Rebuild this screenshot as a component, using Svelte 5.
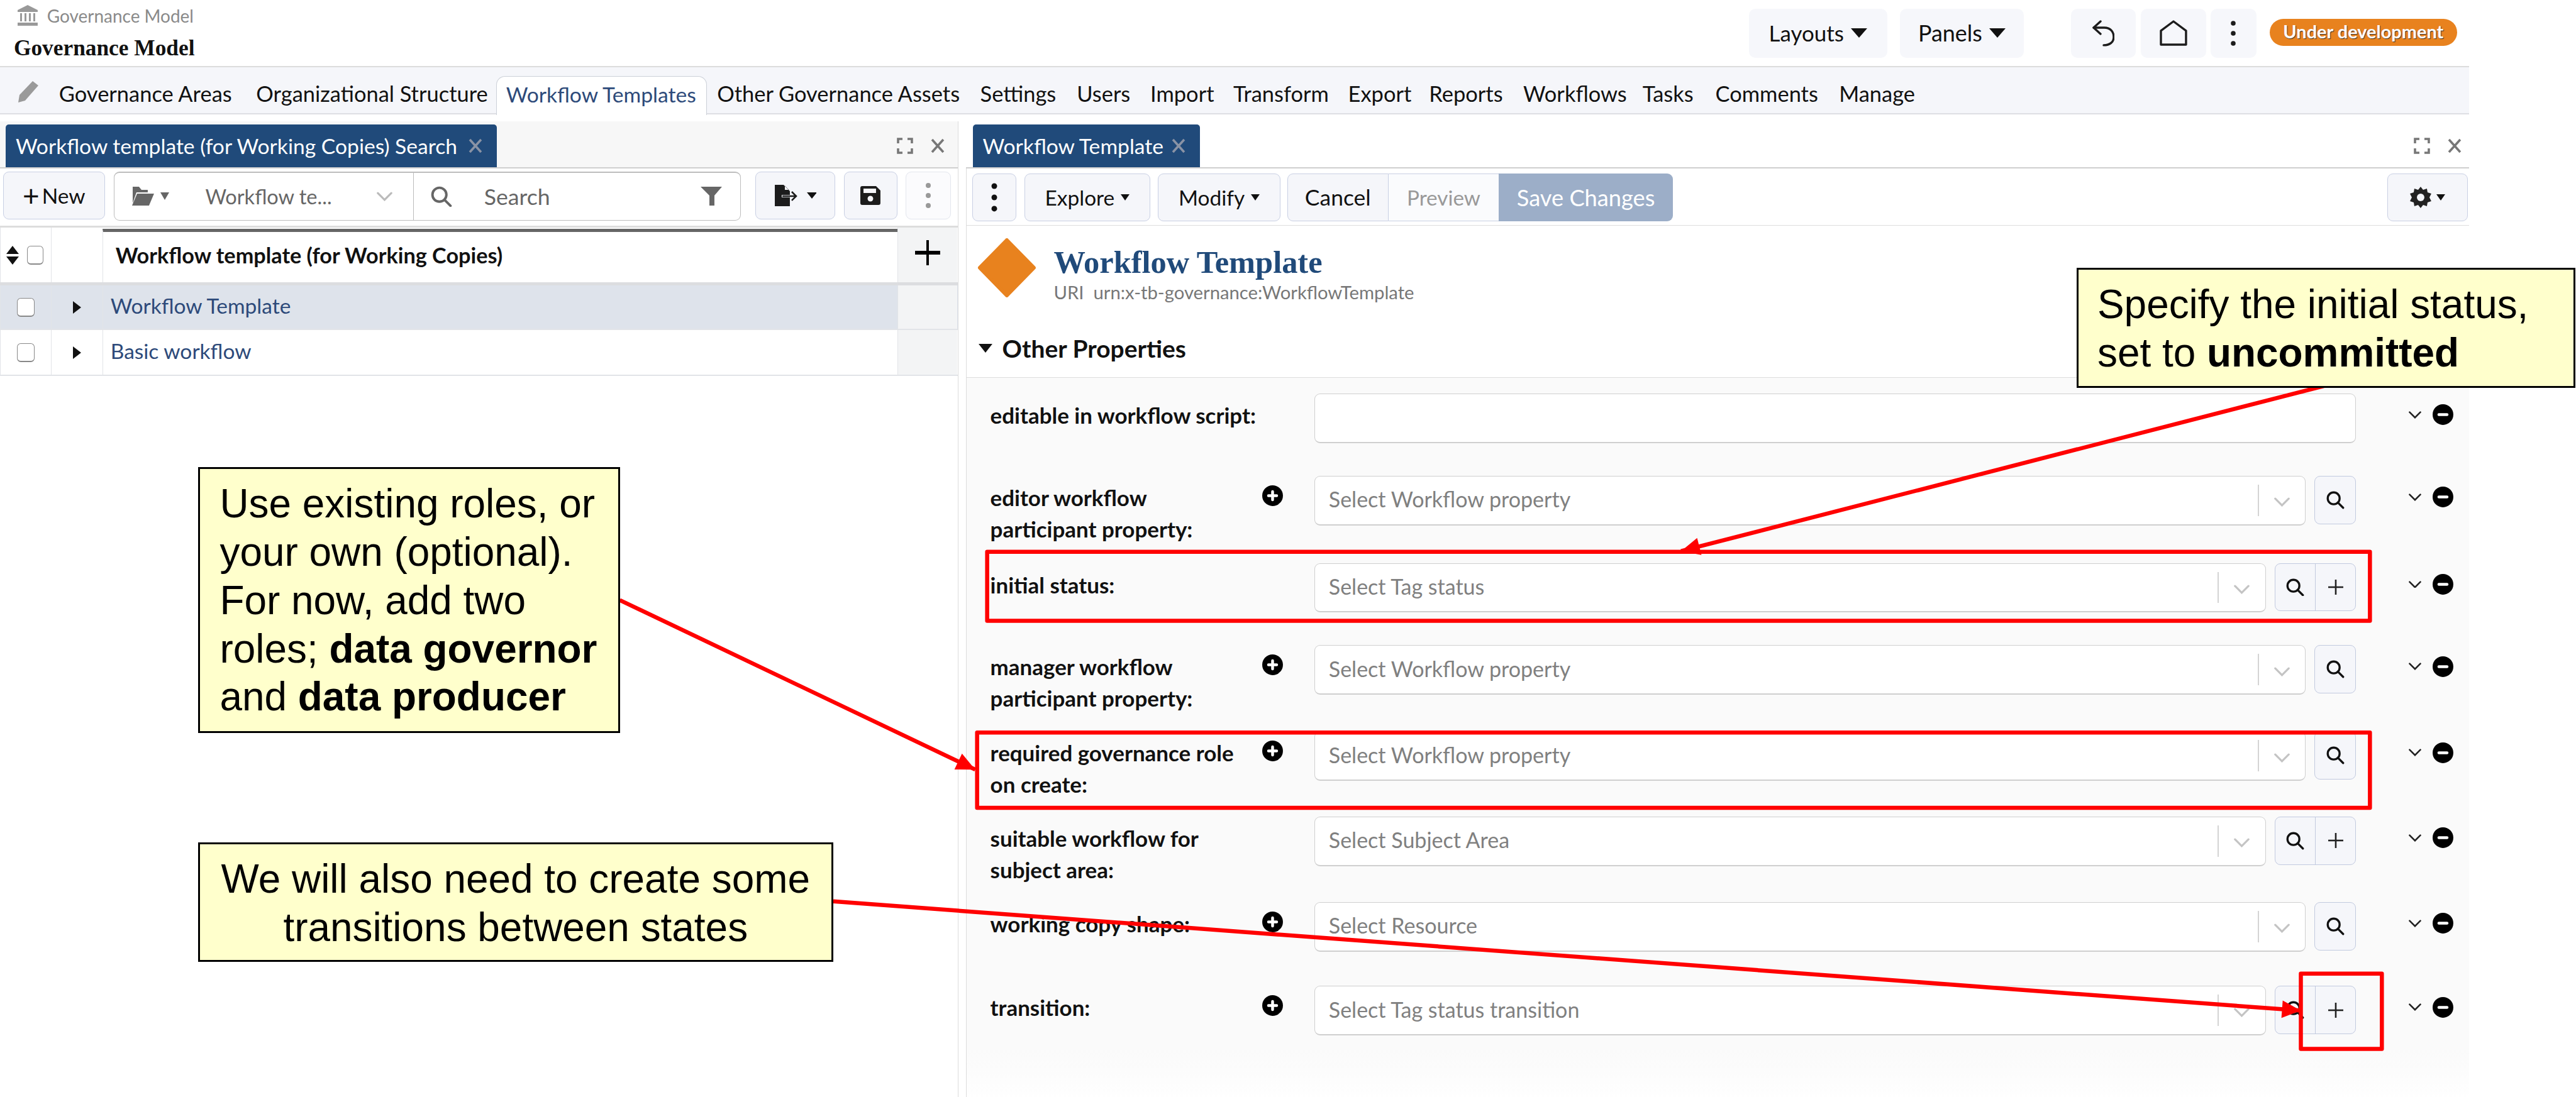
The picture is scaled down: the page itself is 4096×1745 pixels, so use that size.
<script lang="ts">
	const navItems = [
		{ label: 'Governance Areas', w: 281 },
		{ label: 'Organizational Structure', w: 366 },
		{ label: 'Workflow Templates', w: 304, active: true },
		{ label: 'Other Governance Assets', w: 386 },
		{ label: 'Settings', w: 121 },
		{ label: 'Users', w: 84 },
		{ label: 'Import', w: 99 },
		{ label: 'Transform', w: 150 },
		{ label: 'Export', w: 96 },
		{ label: 'Reports', w: 117 },
		{ label: 'Workflows', w: 157 },
		{ label: 'Tasks', w: 83 },
		{ label: 'Comments', w: 164 },
		{ label: 'Manage', w: 129 }
	];

	const rows = [
		{ lines: ['editable in workflow script:'], h: 131, text: true },
		{ lines: ['editor workflow', 'participant property:'], add: true, ph: 'Select Workflow property', h: 139 },
		{ lines: ['initial status:'], ph: 'Select Tag status', create: true, h: 131 },
		{ lines: ['manager workflow', 'participant property:'], add: true, ph: 'Select Workflow property', h: 137 },
		{ lines: ['required governance role', 'on create:'], add: true, ph: 'Select Workflow property', h: 136 },
		{ lines: ['suitable workflow for', 'subject area:'], ph: 'Select Subject Area', create: true, h: 136 },
		{ lines: ['working copy shape:'], add: true, ph: 'Select Resource', h: 134 },
		{ lines: ['transition:'], add: true, ph: 'Select Tag status transition', create: true, h: 100 }
	];

	const boxes = [
		{ x: 1572, y: 879, w: 2202, h: 110 },
		{ x: 1556, y: 1167, w: 2218, h: 120 },
		{ x: 3664, y: 1551, w: 129, h: 120 }
	];

	const arrows = [
		{ x1: 3704, y1: 614, x2: 2677, y2: 878 },
		{ x1: 987, y1: 956, x2: 1553, y2: 1226 },
		{ x1: 1327, y1: 1436, x2: 3664, y2: 1610 }
	];

	// arrowhead triangle from the line's direction
	function head(a: { x1: number; y1: number; x2: number; y2: number }) {
		const dx = a.x2 - a.x1;
		const dy = a.y2 - a.y1;
		const len = Math.hypot(dx, dy);
		const ux = dx / len;
		const uy = dy / len;
		const bx = a.x2 - ux * 30;
		const by = a.y2 - uy * 30;
		const px = -uy * 14;
		const py = ux * 14;
		return `${a.x2},${a.y2} ${bx + px},${by + py} ${bx - px},${by - py}`;
	}
</script>

{#snippet searchIcon(size = 26)}
	<svg width={size} height={size} viewBox="0 0 26 26" fill="none" stroke="currentColor" stroke-width="3">
		<circle cx="10.5" cy="10.5" r="8.5" />
		<path d="M16.5 16.5 L24 24" stroke-linecap="round" />
	</svg>
{/snippet}

{#snippet chevron(color = '#bbb', w = 24, h = 14)}
	<svg width={w} height={h} viewBox="0 0 24 14" fill="none" stroke={color} stroke-width="3" stroke-linecap="round">
		<path d="M2 2 L12 12 L22 2" />
	</svg>
{/snippet}

{#snippet caret(w = 14, h = 12, color = '#111')}
	<svg width={w} height={h} viewBox="0 0 14 12" preserveAspectRatio="none"><path d="M0 0 H14 L7 12 Z" fill={color} /></svg>
{/snippet}

{#snippet roundIcon(sign: string)}
	<svg width="33" height="33" viewBox="0 0 33 33">
		<circle cx="16.5" cy="16.5" r="16.5" fill="#000" />
		<path
			d={sign === 'plus' ? 'M16.5 10 V23 M10 16.5 H23' : 'M10 16.5 H23'}
			stroke="#fff"
			stroke-width="4.5"
			stroke-linecap="round"
		/>
	</svg>
{/snippet}

{#snippet xMark(color = '#777')}
	<svg width="24" height="24" viewBox="0 0 24 24" fill="none" stroke={color} stroke-width="3.6">
		<path d="M3 2 L21 22 M21 2 L3 22" />
	</svg>
{/snippet}

{#snippet expand()}
	<svg width="26" height="26" viewBox="0 0 26 26" fill="none" stroke="#777" stroke-width="3.6">
		<path d="M2 9 V2 H9 M17 2 H24 V9 M24 17 V24 H17 M9 24 H2 V17" />
	</svg>
{/snippet}

<div class="page">
	<header class="top">
		<div class="brand">
			<div class="crumb">
				<svg width="34" height="34" viewBox="0 0 34 34" fill="#999">
					<path d="M17 0 L33 8 V11 H1 V8 Z" />
					<rect x="5" y="13" width="3" height="13" />
					<rect x="12" y="13" width="3" height="13" />
					<rect x="19" y="13" width="3" height="13" />
					<rect x="26" y="13" width="3" height="13" />
					<rect x="1" y="28" width="32" height="5" />
				</svg>
				<span>Governance Model</span>
			</div>
			<div class="model">Governance Model</div>
		</div>
		<div class="top-actions">
			<button class="top-btn layouts">Layouts {@render caret(26, 15)}</button>
			<button class="top-btn panels">Panels {@render caret(26, 15)}</button>
			<button class="top-btn undo" aria-label="Undo">
				<svg width="36" height="42" viewBox="0 0 36 42" fill="none" stroke="#1c1c1c" stroke-width="3.4" stroke-linecap="round" stroke-linejoin="round">
					<path d="M2 12 H19 C29 12 34 19 34 27 C34 35 28 40 18 40" />
					<path d="M13 2 L2 12 L13 22" />
				</svg>
			</button>
			<button class="top-btn home" aria-label="Home">
				<svg width="44" height="41" viewBox="0 0 44 41" fill="none" stroke="#1c1c1c" stroke-width="3.4" stroke-linejoin="round">
					<path d="M22 2 L42 17 V39 H2 V17 Z" />
				</svg>
			</button>
			<button class="top-btn dots" aria-label="More">
				<svg width="10" height="42" viewBox="0 0 10 42" fill="#1c1c1c">
					<circle cx="5" cy="5" r="3.8" /><circle cx="5" cy="21" r="3.8" /><circle cx="5" cy="37" r="3.8" />
				</svg>
			</button>
			<span class="badge">Under development</span>
		</div>
	</header>

	<nav class="nav">
		<svg class="pencil" width="36" height="36" viewBox="0 0 36 36" fill="#9a9a9a">
			<path d="M25 1 L34 8 L13 32 L2 35 L4 23 Z" />
		</svg>
		{#each navItems as item (item.label)}
			<span class="nav-item" class:active={item.active} style:width="{item.w}px">{item.label}</span>
		{/each}
	</nav>

	<main class="main">
		<section class="left">
			<div class="tabs left-tabs">
				<div class="tab" style:width="782px">
					<span class="tab-label">Workflow template (for Working Copies) Search</span>
					{@render xMark('#8a93a5')}
				</div>
				<div class="tab-tools">{@render expand()}{@render xMark()}</div>
			</div>
			<div class="toolbar left-bar">
				<button class="btn new"><span class="plus-sign">+</span>New</button>
				<div class="search-group">
					<div class="class-pick">
						<svg width="36" height="30" viewBox="0 0 36 30" fill="#666">
							<path d="M2 0 H12 L16 5 H26 V9 H8 L2 26 Z" />
							<path d="M9 11 H36 L28 30 H1 Z" />
						</svg>
						{@render caret(14, 12, '#666')}
						<span class="pick-text">Workflow te...</span>
						{@render chevron('#bbb', 27, 15)}
					</div>
					<div class="query">
						{@render searchIcon(34)}
						<span class="query-text">Search</span>
						<svg class="funnel" width="34" height="30" viewBox="0 0 34 30" fill="#666">
							<path d="M0 0 H34 L22 14 V30 H14 V14 Z" />
						</svg>
					</div>
				</div>
				<button class="btn export" aria-label="Export">
					<svg width="37" height="34" viewBox="0 0 37 34">
						<path d="M1 0 H15 L25 10 V16 H12 V20 H25 V34 H1 Z M17 1.5 V8 H23.5 Z" fill="#1c1c1c" fill-rule="evenodd" />
						<path d="M13 18 H34 M28 11 L35 18 L28 25" fill="none" stroke="#1c1c1c" stroke-width="2.6" />
					</svg>
					{@render caret(16, 10)}
				</button>
				<button class="btn save" aria-label="Save">
					<svg width="32" height="30" viewBox="0 0 32 30" fill="#1c1c1c">
						<path d="M3 0 H25 L32 7 V27 Q32 30 29 30 H3 Q0 30 0 27 V3 Q0 0 3 0 Z M5 4 V11 H25 V4 Z" fill-rule="evenodd" />
						<circle cx="16" cy="20" r="4.5" fill="#f5f6fa" />
					</svg>
				</button>
				<button class="btn kebab soft" aria-label="More">
					<svg width="10" height="42" viewBox="0 0 10 42" fill="#999">
						<circle cx="5" cy="5" r="4" /><circle cx="5" cy="21" r="4" /><circle cx="5" cy="37" r="4" />
					</svg>
				</button>
			</div>

			<div class="table">
				<div class="t-row t-head">
					<div class="cell first">
						<svg width="22" height="30" viewBox="0 0 22 30" fill="#111">
							<path d="M11 0 L21 13 H1 Z M1 17 H21 L11 30 Z" />
						</svg>
						<i class="check small"></i>
					</div>
					<div class="cell"></div>
					<div class="cell head-title">Workflow template (for Working Copies)</div>
					<div class="cell add-col">
						<svg width="40" height="40" viewBox="0 0 40 40" fill="#000">
							<rect x="18" y="0" width="4" height="40" />
							<rect x="0" y="17" width="40" height="6" />
						</svg>
					</div>
				</div>
				<div class="t-row selected">
					<div class="cell center"><i class="check"></i></div>
					<div class="cell center"><svg width="13" height="20" viewBox="0 0 13 20"><path d="M0 0 L13 10 L0 20 Z" fill="#111" /></svg></div>
					<div class="cell link">Workflow Template</div>
					<div class="cell add-col"></div>
				</div>
				<div class="t-row last">
					<div class="cell center"><i class="check"></i></div>
					<div class="cell center"><svg width="13" height="20" viewBox="0 0 13 20"><path d="M0 0 L13 10 L0 20 Z" fill="#111" /></svg></div>
					<div class="cell link">Basic workflow</div>
					<div class="cell add-col"></div>
				</div>
			</div>
		</section>

		<section class="right">
			<div class="tabs right-tabs">
				<div class="tab" style:width="362px">
					<span class="tab-label">Workflow Template</span>
					{@render xMark('#8a93a5')}
				</div>
				<div class="tab-tools">{@render expand()}{@render xMark()}</div>
			</div>
			<div class="toolbar right-bar">
				<button class="btn kebab" aria-label="More">
					<svg width="10" height="46" viewBox="0 0 10 46" fill="#111">
						<circle cx="5" cy="5" r="4.5" /><circle cx="5" cy="23" r="4.5" /><circle cx="5" cy="41" r="4.5" />
					</svg>
				</button>
				<button class="btn explore">Explore {@render caret(14, 10)}</button>
				<button class="btn modify">Modify {@render caret(14, 10)}</button>
				<div class="edit-group">
					<button class="btn cancel">Cancel</button>
					<button class="btn preview">Preview</button>
					<button class="btn savech">Save Changes</button>
				</div>
				<button class="btn gear" aria-label="Settings">
					<svg width="34" height="34" viewBox="0 0 34 34">
						<path
							d="M17 0 L21 5 L27 3 L28 9 L34 11 L31 17 L34 23 L28 25 L27 31 L21 29 L17 34 L13 29 L7 31 L6 25 L0 23 L3 17 L0 11 L6 9 L7 3 L13 5 Z"
							fill="#222"
						/>
						<circle cx="17" cy="17" r="6" fill="#f5f6fa" />
					</svg>
					{@render caret(14, 10)}
				</button>
			</div>

			<div class="resource">
				<svg class="diamond" width="94" height="94" viewBox="0 0 94 94">
					<path d="M47 3 L90 47 L47 91 L4 47 Z" fill="#e8821e" stroke="#e8821e" stroke-width="6" stroke-linejoin="round" />
				</svg>
				<div>
					<div class="res-title">Workflow Template</div>
					<div class="res-uri">URI&nbsp; urn:x-tb-governance:WorkflowTemplate</div>
				</div>
			</div>
			<div class="section-head">
				{@render caret(22, 14)}
				<span>Other Properties</span>
			</div>

			<div class="props">
				{#each rows as row, i (i)}
					<div class="prop" style:height="{row.h}px">
						<div class="prop-label">
							<div class="prop-lines">
								{#each row.lines as line (line)}
									<div>{line}</div>
								{/each}
							</div>
							{#if row.add}
								<span class="prop-add">{@render roundIcon('plus')}</span>
							{/if}
						</div>
						<div class="prop-field">
							{#if row.text}
								<div class="input text-input"></div>
							{:else}
								<div class="input select">
									<span class="ph">{row.ph}</span>
									<span class="sel-sep"></span>
									<span class="sel-chev">{@render chevron('#c4c4c4', 27, 15)}</span>
								</div>
								<div class="field-btns">
									<button class="fbtn" aria-label="Search">{@render searchIcon(29)}</button>
									{#if row.create}
										<button class="fbtn" aria-label="Create">
											<svg width="24" height="24" viewBox="0 0 24 24" fill="#222">
												<rect x="10.7" y="0" width="2.6" height="24" />
												<rect x="0" y="10.7" width="24" height="2.6" />
											</svg>
										</button>
									{/if}
								</div>
							{/if}
						</div>
						<div class="prop-end">
							{@render chevron('#222', 22, 12)}
							{@render roundIcon('minus')}
						</div>
					</div>
				{/each}
			</div>
		</section>
	</main>

	<svg class="marks" width="4102" height="1748" viewBox="0 0 4102 1748">
		{#each boxes as b (b.x)}
			<rect x={b.x} y={b.y} width={b.w} height={b.h} fill="none" stroke="#ff0000" stroke-width="6.5" stroke-linejoin="round" />
		{/each}
		{#each arrows as a (a.x1)}
			<line x1={a.x1} y1={a.y1} x2={a.x2} y2={a.y2} stroke="#ff0000" stroke-width="6.5" />
			<polygon points={head(a)} fill="#ff0000" />
		{/each}
	</svg>

	<div class="callout c-status">Specify the initial status,<br />set to <b>uncommitted</b></div>
	<div class="callout c-roles">
		Use existing roles, or<br />your own (optional).<br />For now, add two<br />roles; <b>data governor</b><br />and <b>data producer</b>
	</div>
	<div class="callout c-trans">We will also need to create some<br />transitions between states</div>
</div>

<style>
	:global(body) {
		margin: 0;
		background: #fff;
		overflow: hidden;
	}

	.page {
		position: relative;
		width: 4102px;
		height: 1748px;
		overflow: hidden;
		zoom: 0.9985;
		font-family: Lato, 'Open Sans', sans-serif;
		font-size: 34px;
		color: #111;
		background: #fff;
	}

	button {
		font: inherit;
		color: inherit;
		cursor: pointer;
	}

	.top {
		width: 3932px;
		height: 105px;
		display: flex;
		justify-content: space-between;
	}

	.brand {
		padding: 8px 0 0 27px;
	}

	.crumb {
		display: flex;
		align-items: center;
		gap: 14px;
		color: #8a8a8a;
		font-size: 28px;
	}

	.model {
		margin: 14px 0 0 -5px;
		font: bold 35.4px 'Liberation Serif', serif;
		color: #111;
	}

	.top-actions {
		display: flex;
		align-items: flex-start;
		padding-top: 14px;
		padding-right: 19px;
	}

	.top-btn {
		height: 78px;
		border: none;
		border-radius: 10px;
		background: #f6f7fb;
		display: flex;
		align-items: center;
		justify-content: center;
		padding: 0;
		gap: 11px;
	}

	.layouts { width: 220px; font-size: 35px; }
	.panels { width: 198px; margin-left: 20px; font-size: 36px; }
	.undo { width: 103px; margin-left: 75px; }
	.home { width: 104px; margin-left: 8px; }
	.dots { width: 73px; margin-left: 7px; }

	.badge {
		width: 299px;
		height: 43px;
		margin: 16px 0 0 21px;
		border-radius: 22px;
		background: #e8821e;
		color: #fff;
		font-weight: 700;
		font-size: 29px;
		line-height: 41px;
		text-align: center;
		text-shadow: 1px 1px 1px #333;
		white-space: nowrap;
	}

	.nav {
		width: 3932px;
		height: 77px;
		box-sizing: border-box;
		border-top: 3px solid #dcdcdc;
		border-bottom: 3px solid #dedfe3;
		background: #f5f6fa;
		display: flex;
		align-items: flex-end;
		gap: 33px;
		padding-left: 94px;
		position: relative;
	}

	.pencil {
		position: absolute;
		left: 27px;
		top: 21px;
	}

	.nav-item {
		height: 60px;
		line-height: 58px;
		white-space: nowrap;
		font-size: 34.5px;
	}

	.nav-item.active {
		color: #2d4a7a;
		font-size: 33.7px;
		box-sizing: content-box;
		height: 61px;
		padding: 0 15px;
		margin: 0 -17px -3px;
		background: #fff;
		border: 2px solid #ccd0d8;
		border-bottom: none;
		border-radius: 14px 14px 0 0;
	}

	.main {
		display: flex;
		height: 1566px;
		margin-top: 11px;
	}

	.left {
		width: 1526px;
		box-sizing: border-box;
		border-right: 2px solid #dcdcdc;
		flex: none;
	}

	.right {
		width: 2394px;
		margin-left: 12px;
		flex: none;
		display: flex;
		flex-direction: column;
	}

	.tabs {
		height: 75px;
		box-sizing: border-box;
		border-bottom: 3px solid #cfcfcf;
		display: flex;
		align-items: flex-end;
		justify-content: space-between;
	}

	.left-tabs {
		background: #f7f7f7;
		padding-left: 9px;
	}

	.right-tabs {
		padding-left: 11px;
	}

	.tab {
		height: 68px;
		box-sizing: border-box;
		background: #204a7a;
		border-radius: 5px 5px 0 0;
		color: #fff;
		display: flex;
		align-items: center;
		justify-content: space-between;
		padding: 0 22px 0 16px;
		font-size: 33.7px;
		white-space: nowrap;
	}

	.tab-tools {
		display: flex;
		align-items: center;
		gap: 27px;
		height: 68px;
		padding-right: 20px;
	}

	.right-tabs .tab-tools {
		padding-right: 11px;
	}

	.toolbar {
		height: 92px;
		box-sizing: border-box;
		padding-top: 5px;
		display: flex;
	}

	.left-bar {
		padding-left: 5px;
	}

	.right-bar {
		padding: 8px 2px 0 9px;
		border-bottom: 2px solid #ddd;
		border-left: 2px solid #dcdcdc;
	}

	.btn {
		height: 77px;
		box-sizing: border-box;
		border: 2px solid #c9d0e4;
		border-radius: 9px;
		background: #f5f6fa;
		display: flex;
		align-items: center;
		justify-content: center;
		padding: 0;
		gap: 10px;
		flex: none;
	}

	.new { width: 162px; gap: 4px; font-size: 33.6px; }
	.plus-sign { font-size: 46px; line-height: 40px; font-weight: 400; }

	.search-group {
		width: 999px;
		height: 79px;
		box-sizing: border-box;
		margin-left: 14px;
		border: 2px solid #bdbdbd;
		border-top-width: 3px;
		border-radius: 9px;
		background: #fff;
		display: flex;
		flex: none;
	}

	.class-pick {
		width: 477px;
		box-sizing: border-box;
		border-right: 2px solid #bbb;
		display: flex;
		align-items: center;
		padding-left: 27px;
		color: #666;
	}

	.class-pick :global(svg:nth-child(2)) {
		margin-left: 10px;
	}

	.pick-text {
		margin-left: 58px;
		width: 272px;
		white-space: nowrap;
		font-size: 32.6px;
	}

	.query {
		flex: 1;
		display: flex;
		align-items: center;
		padding-left: 27px;
		color: #666;
	}

	.query-text {
		margin-left: 51px;
		flex: 1;
		font-size: 35.7px;
	}

	.funnel {
		margin-right: 29px;
	}

	.export { width: 127px; margin-left: 23px; gap: 15px; }
	.save { width: 85px; margin-left: 14px; }
	.kebab { width: 72px; margin-left: 13px; }
	.kebab.soft { background: #fbfbfd; border-color: #e3e6ee; }
	.right-bar .kebab { width: 70px; margin-left: 0; }
	.explore { width: 201px; margin-left: 13px; font-size: 33.5px; }
	.modify { width: 195px; margin-left: 12px; font-size: 33.5px; }
	.edit-group { display: flex; margin-left: 11px; }
	.cancel { width: 161px; border-radius: 9px 0 0 9px; font-size: 35.5px; }
	.preview { width: 176px; border-radius: 0; border-left: none; border-right: none; background: #fafbfd; color: #999; font-size: 33.3px; }
	.savech { width: 277px; border: none; border-radius: 0 9px 9px 0; background: #9caec8; color: #fff; font-size: 36.3px; }
	.gear { width: 128px; margin-left: auto; gap: 8px; }

	.table {
		border-top: 4px solid #dddddd;
	}

	.t-row {
		display: grid;
		grid-template-columns: 81px 82px 1266px 95px;
		height: 71px;
		box-sizing: border-box;
		border-bottom: 3px solid #e2e4e8;
	}

	.t-row.last {
		height: 73px;
	}

	.t-head {
		height: 92px;
		border-bottom-width: 6px;
		border-bottom-color: #dcdde0;
	}

	.selected {
		background: #dee3eb;
	}

	.cell {
		box-sizing: border-box;
		border-left: 2px solid #e2e4e8;
		display: flex;
		align-items: center;
	}

	.first {
		gap: 12px;
		padding-left: 8px;
	}

	.center {
		justify-content: center;
	}

	.head-title {
		font-weight: 700;
		font-size: 34.3px;
		border-top: 6px solid #666;
		margin-top: 2px;
		padding-left: 20px;
		padding-bottom: 8px;
	}

	.add-col {
		background: #f3f4f5;
		justify-content: center;
		align-items: flex-start;
		padding-top: 20px;
	}

	.link {
		color: #2d4a7a;
		padding: 0 0 5px 12px;
		font-size: 33.6px;
	}

	.check {
		display: block;
		width: 28px;
		height: 30px;
		box-sizing: border-box;
		border: 2px solid #888;
		border-bottom-width: 3px;
		border-radius: 6px;
		background: #fff;
	}

	.check.small {
		width: 26px;
	}

	.resource {
		display: flex;
		box-sizing: border-box;
		border-left: 2px solid #dcdcdc;
		padding: 20px 0 0 17px;
		height: 105px;
		gap: 28px;
	}

	.res-title {
		font: bold 50.5px/58px 'Liberation Serif', serif;
		color: #204a7a;
		margin-top: 10px;
	}

	.res-uri {
		color: #777;
		font-size: 29.3px;
		line-height: 36px;
		white-space: nowrap;
	}

	.section-head {
		height: 137px;
		box-sizing: border-box;
		padding: 44px 0 0 19px;
		border-left: 2px solid #dcdcdc;
		border-bottom: 2px solid #ddd;
		display: flex;
		align-items: center;
		gap: 16px;
		font-weight: 700;
		font-size: 39px;
	}

	.props {
		flex: 1;
		background: linear-gradient(#fafafa calc(100% - 90px), #fff);
		border-left: 2px solid #dcdcdc;
		padding: 25px 0 0 38px;
	}

	.prop {
		display: flex;
		align-items: flex-start;
	}

	.prop-label {
		width: 516px;
		flex: none;
		position: relative;
	}

	.prop-lines {
		padding-top: 10px;
		font-weight: 700;
		font-size: 35px;
		line-height: 50px;
	}

	.prop-add {
		position: absolute;
		left: 433px;
		top: 15px;
		line-height: 0;
	}

	.prop-field {
		width: 1659px;
		display: flex;
		gap: 14px;
		flex: none;
	}

	.input {
		flex: 1;
		height: 79px;
		box-sizing: border-box;
		background: #fff;
		border: 2px solid #cfcfcf;
		border-bottom-width: 3px;
		border-radius: 9px;
	}

	.select {
		display: flex;
		align-items: center;
		padding-left: 22px;
	}

	.ph {
		flex: 1;
		color: #808080;
		font-size: 34.1px;
		padding-bottom: 4px;
	}

	.sel-sep {
		width: 2px;
		height: 50px;
		background: #d4d4d4;
	}

	.sel-chev {
		width: 74px;
		display: flex;
		justify-content: center;
		padding-top: 6px;
		line-height: 0;
		box-sizing: border-box;
	}

	.field-btns {
		display: flex;
		height: 77px;
		border: 2px solid #c2cadf;
		border-radius: 9px;
		box-sizing: border-box;
		background: #f5f6fa;
		overflow: hidden;
	}

	.fbtn {
		width: 64px;
		border: none;
		background: none;
		padding: 0;
		display: flex;
		align-items: center;
		justify-content: center;
		color: #111;
	}

	.fbtn + .fbtn {
		border-left: 2px solid #c2cadf;
	}

	.prop-end {
		display: flex;
		align-items: center;
		gap: 17px;
		margin-left: 83px;
		height: 68px;
	}

	.marks {
		position: absolute;
		left: 0;
		top: 0;
		pointer-events: none;
	}

	.callout {
		position: absolute;
		box-sizing: border-box;
		background: #ffffcc;
		border: 3.5px solid #000;
		font: 64px/77px 'Liberation Sans', Arial, sans-serif;
		color: #000;
		white-space: nowrap;
	}

	.c-status {
		left: 3307px;
		top: 427px;
		width: 794px;
		height: 191px;
		padding: 17px 0 0 30px;
	}

	.c-roles {
		left: 315px;
		top: 744px;
		width: 672px;
		height: 424px;
		padding: 17px 0 0 32px;
	}

	.c-trans {
		left: 315px;
		top: 1342px;
		width: 1012px;
		height: 190px;
		padding-top: 17px;
		text-align: center;
	}
</style>
